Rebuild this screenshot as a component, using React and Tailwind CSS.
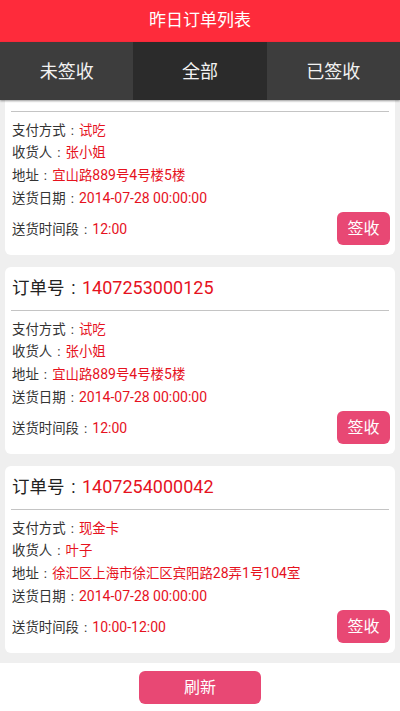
import React from 'react';

const orders = [
  {
    id: '1407252000118',
    pay: '试吃',
    name: '张小姐',
    addr: '宜山路889号4号楼5楼',
    date: '2014-07-28 00:00:00',
    slot: '12:00',
  },
  {
    id: '1407253000125',
    pay: '试吃',
    name: '张小姐',
    addr: '宜山路889号4号楼5楼',
    date: '2014-07-28 00:00:00',
    slot: '12:00',
  },
  {
    id: '1407254000042',
    pay: '现金卡',
    name: '叶子',
    addr: '徐汇区上海市徐汇区宾阳路28弄1号104室',
    date: '2014-07-28 00:00:00',
    slot: '10:00-12:00',
  },
];

const tabs = ['未签收', '全部', '已签收'];

// CJK glyphs render a bit narrower than the latin ones on the device, so split runs
const mix = (str) =>
  str.match(/[\u3000-\u9fff\uff00-\uffef]+|[^\u3000-\u9fff\uff00-\uffef]+/g).map((part, i) =>
    /[\u3000-\u9fff\uff00-\uffef]/.test(part) ? (
      <span key={i} className="text-[13.4px]">{part}</span>
    ) : (
      <span key={i}>{part}</span>
    )
  );

// full-width colon sits centred in its box on the device
const Colon = ({ size = 'text-[13.4px]' }) => (
  <span className={`${size} inline-block w-[1em] text-center`}>:</span>
);

const Row = ({ label, value, tall }) => (
  <div
    className={`${tall ? 'h-[23px] leading-[23px]' : 'h-[22px] leading-[22px]'} text-[14px] text-[#333] whitespace-nowrap`}
  >
    {mix(label)}
    <Colon />
    <span className="text-[#e6121e]">{mix(value)}</span>
  </div>
);

const OrderCard = ({ order, partial }) => (
  <div className={`bg-white px-[6px] pb-[10px] ${partial ? 'rounded-b-[6px] pt-[11px]' : 'rounded-[6px] pt-[8px]'}`}>
    {!partial && (
      <div className="h-[26px] leading-[26px] text-[18px] text-[#222] pl-px mb-[9px]">
        <span className="text-[17.5px]">订单号</span>
        <Colon size="text-[17.5px]" />
        <span className="text-[#e6121e]">{order.id}</span>
      </div>
    )}
    <div className="h-px bg-[#c4c4c4]" />
    <div className="mt-[7px] pl-px">
      <Row label="支付方式" value={order.pay} />
      <Row label="收货人" value={order.name} tall />
      <Row label="地址" value={order.addr} tall />
      <Row label="送货日期" value={order.date} />
    </div>
    <div className="mt-[3px] flex items-center justify-between pl-px">
      <Row label="送货时间段" value={order.slot} />
      <button className="w-[53px] h-[33px] rounded-[6px] bg-[#e84874] text-white text-[16px] mr-[-1px]">
        签收
      </button>
    </div>
  </div>
);

export default function App() {
  return (
    <div
      className="w-[400px] h-[711px] flex flex-col overflow-hidden bg-white"
      style={{ fontFamily: "Roboto, 'Noto Sans CJK SC', sans-serif" }}
    >
      <div className="h-[42px] bg-[#fe2b3b] flex items-center justify-center text-white text-[17px]">
        昨日订单列表
      </div>
      <div className="h-[58px] flex shadow-[0_1px_2px_rgba(0,0,0,0.4)] z-10">
        {tabs.map((t, i) => (
          <div
            key={t}
            className={`flex-1 flex items-center justify-center text-[18px] text-[#f2f2f2] ${
              i === 1 ? 'bg-[#2b2b2b]' : 'bg-[#3d3d3d]'
            }`}
          >
            {t}
          </div>
        ))}
      </div>
      <div className="flex-1 overflow-hidden bg-[#efefef] px-[5px]">
        {/* list scrolled a little: the first card's title is out of view */}
        <div className="flex flex-col gap-[12px]">
          {orders.map((o, i) => (
            <OrderCard key={o.id} order={o} partial={i === 0} />
          ))}
        </div>
      </div>
      <div className="h-[48px] bg-white flex justify-center pt-[8px]">
        <button className="w-[122px] h-[33px] rounded-[6px] bg-[#e84874] text-white text-[16px]">
          刷新
        </button>
      </div>
    </div>
  );
}
